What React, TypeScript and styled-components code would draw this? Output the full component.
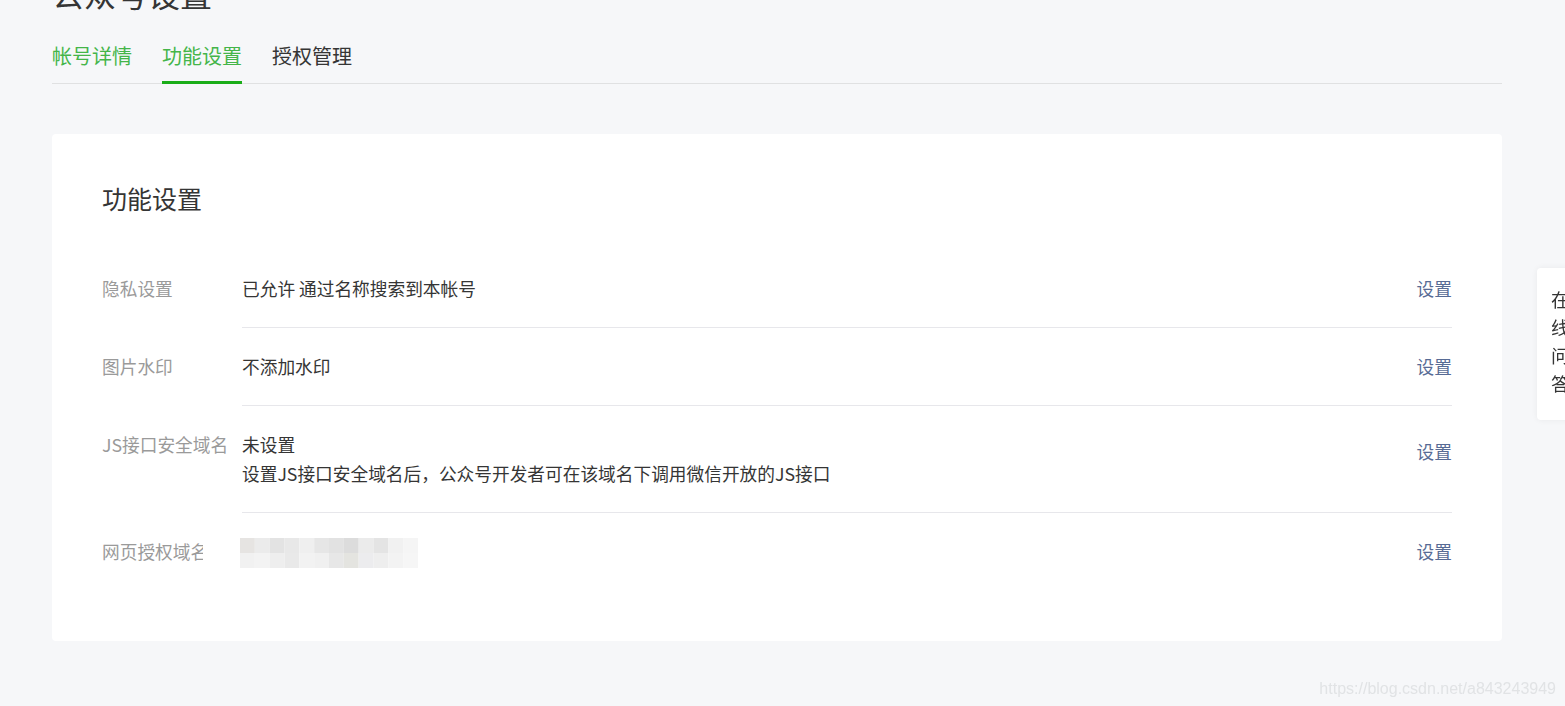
import styled, { createGlobalStyle } from "styled-components";

const GlobalStyle = createGlobalStyle`
  html, body {
    margin: 0;
    background: #f6f7f9;
    font-family: "Noto Sans CJK SC", "Microsoft YaHei", sans-serif;
    color: #353535;
    overflow: hidden;
  }
`;

const tabs = [
  { label: "帐号详情", tone: "green" },
  { label: "功能设置", tone: "active" },
  { label: "授权管理", tone: "plain" },
];

const mosaicTop = ["#e6e4e2", "#ebebeb", "#e3e3e3", "#e8e8e8", "#efefef", "#e6e6e6", "#e2e2e2", "#dcdcdc", "#ebebeb", "#e4e4e4", "#f1f1f1", "#f5f5f5"];
const mosaicBottom = ["#f1f1f1", "#f3f3f3", "#eeeeee", "#e9e9e9", "#f2f2f2", "#f0f0f0", "#e7e7e7", "#e4e4e0", "#ececee", "#eeeeee", "#f3f3f3", "#f6f6f6"];

// blurred-out domain value, drawn as a coarse mosaic
function Mosaic() {
  return (
    <svg width="178" height="30" viewBox="0 0 180 30" preserveAspectRatio="none">
      {mosaicTop.map((c, i) => (
        <rect key={"t" + i} x={i * 15} y={0} width={15} height={15} fill={c} />
      ))}
      {mosaicBottom.map((c, i) => (
        <rect key={"b" + i} x={i * 15} y={15} width={15} height={15} fill={c} />
      ))}
    </svg>
  );
}

export default function App() {
  return (
    <>
      <GlobalStyle />
      <Page>
        <PageTitle>公众号设置</PageTitle>
        <TabBar>
          {tabs.map((t) => (
            <Tab key={t.label} $tone={t.tone}>
              {t.label}
            </Tab>
          ))}
        </TabBar>

        <Card>
          <CardTitle>功能设置</CardTitle>

          <Row>
            <Label>隐私设置</Label>
            <Content>
              <Value>已允许 通过名称搜索到本帐号</Value>
              <Action>设置</Action>
            </Content>
          </Row>

          <Row>
            <Label>图片水印</Label>
            <Content>
              <Value>不添加水印</Value>
              <Action>设置</Action>
            </Content>
          </Row>

          <Row>
            <Label>JS接口安全域名</Label>
            <Content>
              <Value>
                未设置
                <br />
                设置JS接口安全域名后，公众号开发者可在该域名下调用微信开放的JS接口
              </Value>
              <Action $top={7}>设置</Action>
            </Content>
          </Row>

          <Row>
            <Label $clip>网页授权域名</Label>
            <Content $last>
              <Blurred>
                <Mosaic />
              </Blurred>
              <Action>设置</Action>
            </Content>
          </Row>
        </Card>
      </Page>

      <HelpPanel>
        在<br />线<br />问<br />答
      </HelpPanel>
      <Watermark>https://blog.csdn.net/a843243949</Watermark>
    </>
  );
}

const Page = styled.div`
  padding: 0 63px 0 52px;
`;

const PageTitle = styled.h1`
  margin: -27px 0 0;
  font-size: 32px;
  line-height: 40px;
  font-weight: 400;
  color: #353535;
`;

const TabBar = styled.div`
  display: flex;
  gap: 30px;
  margin-top: 28px;
  border-bottom: 1px solid #e0e1e2;
`;

const Tab = styled.div<{ $tone: string }>`
  font-size: 20px;
  line-height: 30px;
  padding-bottom: 10px;
  margin-bottom: -1px;
  color: ${(p) => (p.$tone === "plain" ? "#353535" : "#44b549")};
  border-bottom: 3px solid ${(p) => (p.$tone === "active" ? "#1aad19" : "transparent")};
`;

const Card = styled.div`
  margin-top: 50px;
  background: #fff;
  border-radius: 4px;
  padding: 48px 50px 50px;
`;

const CardTitle = styled.h2`
  margin: 0 0 36px;
  font-size: 25px;
  line-height: 32px;
  font-weight: 400;
  color: #353535;
`;

const Row = styled.div`
  display: flex;
  font-size: 17.7px;
  line-height: 29px;
`;

const Label = styled.div<{ $clip?: boolean }>`
  flex: 0 0 140px;
  padding-top: 24px;
  color: #9a9a9a;
  white-space: nowrap;
  ${(p) =>
    p.$clip &&
    `
    flex-basis: 101px;
    margin-right: 39px;
    overflow: hidden;
  `}
`;

const Content = styled.div<{ $last?: boolean }>`
  flex: 1;
  display: flex;
  justify-content: space-between;
  align-items: flex-start;
  padding: 24px 0;
  border-bottom: ${(p) => (p.$last ? "none" : "1px solid #e7e7eb")};
`;

const Value = styled.div`
  color: #353535;
`;

const Blurred = styled.div`
  display: flex;
  align-items: center;
  height: 29px;
  margin-left: -2px;
  margin-top: 1px;
`;

const Action = styled.a<{ $top?: number }>`
  color: #576b95;
  text-decoration: none;
  cursor: pointer;
  margin-top: ${(p) => p.$top ?? 0}px;
`;

const HelpPanel = styled.div`
  position: fixed;
  left: 1537px;
  top: 268px;
  width: 48px;
  height: 152px;
  box-sizing: border-box;
  padding: 17px 0 0 14px;
  background: #fff;
  border-radius: 4px 0 0 4px;
  box-shadow: 0 0 6px rgba(0, 0, 0, 0.06);
  font-size: 18.67px;
  line-height: 28px;
  color: #353535;
`;

const Watermark = styled.div`
  position: fixed;
  right: 9px;
  bottom: 8px;
  font-family: "Liberation Sans", Arial, sans-serif;
  font-size: 16px;
  color: #e1e3e5;
`;
